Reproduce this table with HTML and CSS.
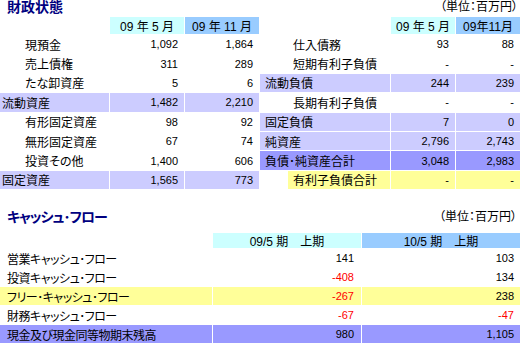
FILE: index.html
```html
<!DOCTYPE html>
<html lang="ja">
<head>
<meta charset="utf-8">
<title>財政状態</title>
<link rel="stylesheet" href="styles.css">
</head>
<body>
<div class="page">
  <section class="bs">
    <div class="bs-col bs-left">
      <h2 class="title">財政状態</h2>
      <div class="grid grid-left">
        <div class="cell"></div>
        <div class="cell hd cyan">09 年 5 月</div>
        <div class="cell hd blue">09 年 11 月</div>

        <div class="cell lbl in">現預金</div>
        <div class="cell num">1,092</div>
        <div class="cell num">1,864</div>

        <div class="cell lbl in">売上債権</div>
        <div class="cell num">311</div>
        <div class="cell num">289</div>

        <div class="cell lbl in">たな卸資産</div>
        <div class="cell num">5</div>
        <div class="cell num">6</div>

        <div class="cell lbl lav">流動資産</div>
        <div class="cell num lav">1,482</div>
        <div class="cell num lav">2,210</div>

        <div class="cell lbl in">有形固定資産</div>
        <div class="cell num">98</div>
        <div class="cell num">92</div>

        <div class="cell lbl in">無形固定資産</div>
        <div class="cell num">67</div>
        <div class="cell num">74</div>

        <div class="cell lbl in">投資その他</div>
        <div class="cell num">1,400</div>
        <div class="cell num">606</div>

        <div class="cell lbl lav">固定資産</div>
        <div class="cell num lav">1,565</div>
        <div class="cell num lav">773</div>
      </div>
    </div>
    <div class="bs-col bs-right">
      <div class="unit">（単位：百万円）</div>
      <div class="grid grid-right">
        <div class="cell"></div>
        <div class="cell hd cyan">09 年 5 月</div>
        <div class="cell hd blue">09年11月</div>

        <div class="cell rlbl rin">仕入債務</div>
        <div class="cell num">93</div>
        <div class="cell num">88</div>

        <div class="cell rlbl rin">短期有利子負債</div>
        <div class="cell num">-</div>
        <div class="cell num">-</div>

        <div class="cell rlbl lav">流動負債</div>
        <div class="cell num lav">244</div>
        <div class="cell num lav">239</div>

        <div class="cell rlbl rin">長期有利子負債</div>
        <div class="cell num">-</div>
        <div class="cell num">-</div>

        <div class="cell rlbl lav">固定負債</div>
        <div class="cell num lav">7</div>
        <div class="cell num lav">0</div>

        <div class="cell rlbl lav">純資産</div>
        <div class="cell num lav">2,796</div>
        <div class="cell num lav">2,743</div>

        <div class="cell rlbl purple">負債･純資産合計</div>
        <div class="cell num purple">3,048</div>
        <div class="cell num purple">2,983</div>

        <div class="cell rlbl rin yellow">有利子負債合計</div>
        <div class="cell num yellow">-</div>
        <div class="cell num yellow">-</div>
      </div>
    </div>
  </section>

  <section class="cf">
    <div class="cf-head">
      <h2 class="title cf-title">キャッシュ･フロー</h2>
      <div class="unit">（単位：百万円）</div>
    </div>
    <div class="grid grid-cf">
      <div class="cell"></div>
      <div class="cell hd cyan">09/5 期　上期</div>
      <div class="cell hd blue">10/5 期　上期</div>

      <div class="cell clbl">営業キャッシュ･フロー</div>
      <div class="cell num cnum">141</div>
      <div class="cell num">103</div>

      <div class="cell clbl">投資キャッシュ･フロー</div>
      <div class="cell num cnum neg">-408</div>
      <div class="cell num">134</div>

      <div class="cell clbl yellow">フリー･キャッシュ･フロー</div>
      <div class="cell num cnum neg yellow">-267</div>
      <div class="cell num yellow">238</div>

      <div class="cell clbl">財務キャッシュ･フロー</div>
      <div class="cell num cnum neg">-67</div>
      <div class="cell num neg">-47</div>

      <div class="cell clbl purple">現金及び現金同等物期末残高</div>
      <div class="cell num cnum purple">980</div>
      <div class="cell num purple">1,105</div>
    </div>
  </section>
</div>
</body>
</html>
```

FILE: styles.css
```css
html, body {
  margin: 0;
  padding: 0;
  background: #ffffff;
}

body {
  font-family: "Liberation Sans", "Noto Sans CJK JP", sans-serif;
  font-size: 12px;
  color: #000000;
  font-feature-settings: "palt";
}

.page {
  width: 520px;
}

.bs {
  display: flex;
  column-gap: 2px;
}

.bs-left {
  width: 258px;
}

.bs-right {
  width: 260px;
}

.title {
  margin: 0;
  padding-left: 7px;
  height: 17px;
  line-height: 15px;
  font-size: 14px;
  font-weight: bold;
  color: #000080;
}

.cf-title {
  letter-spacing: -1px;
}

.unit {
  height: 17px;
  line-height: 15px;
  text-align: right;
  padding-right: 2px;
}

.grid {
  display: grid;
  column-gap: 1px;
  row-gap: 1px;
}

.grid-left {
  grid-template-columns: 109px 74px 74px;
  grid-template-rows: 17px;
  grid-auto-rows: 18.4px;
}

.grid-right {
  grid-template-columns: 130px 64px 64px;
  grid-template-rows: 17px;
  grid-auto-rows: 18.4px;
}

.cell {
  display: flex;
  align-items: center;
  white-space: nowrap;
  overflow: hidden;
}

.hd {
  justify-content: center;
}

.num {
  justify-content: flex-end;
  padding-right: 6px;
  font-size: 11px;
}

.lbl {
  padding-left: 2px;
}

.lbl.in {
  padding-left: 25px;
}

.rlbl {
  padding-left: 5px;
}

.rlbl.rin {
  margin-left: 28px;
}

.cyan { background: #ccffff; }
.blue { background: #99ccff; }
.lav { background: #ccccff; }
.purple { background: #9999ff; }
.yellow { background: #ffff99; }
.neg { color: #ff0000; }

.cf {
  margin-top: 21px;
}

.cf-head {
  display: flex;
  justify-content: space-between;
  align-items: flex-start;
  margin-bottom: 6px;
}

.cf-head .unit {
  padding-right: 3px;
}

.grid-cf {
  grid-template-columns: 212px 148px 158px;
  grid-template-rows: 15px;
  grid-auto-rows: 18px;
}

.clbl {
  padding-left: 7px;
  letter-spacing: -0.5px;
}

.cnum {
  padding-right: 7px;
}
```
